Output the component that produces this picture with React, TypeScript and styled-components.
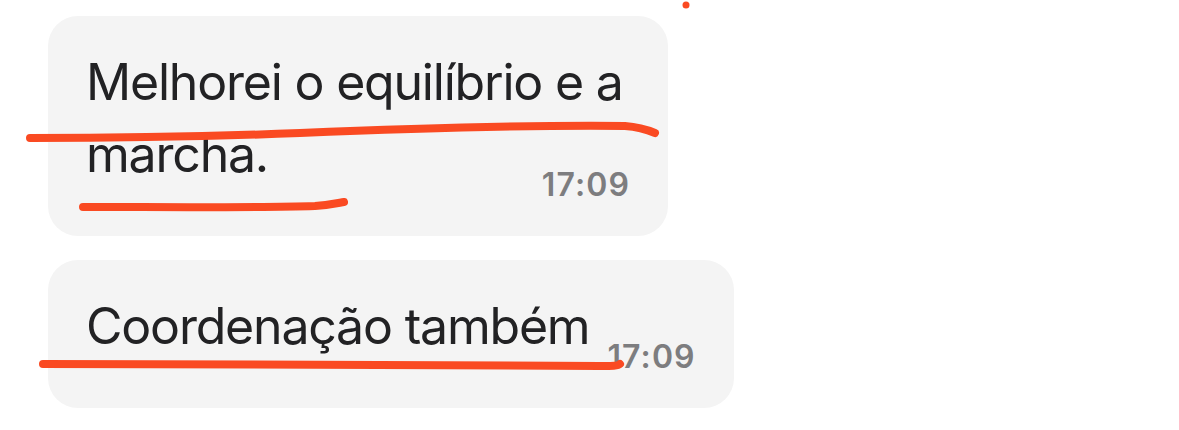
import React from "react";
import styled, { createGlobalStyle } from "styled-components";

const Global = createGlobalStyle`
  html, body { margin: 0; padding: 0; background: #ffffff; }
  body { font-family: Inter, "Noto Sans", sans-serif; }
`;

const Page = styled.div`
  position: relative;
  width: 1179px;
  height: 430px;
  overflow: hidden;
  box-sizing: border-box;
  padding: 16px 0 0 48px;
  display: flex;
  flex-direction: column;
  align-items: flex-start;
  gap: 24px;
`;

const Bubble = styled.div<{ $minH: number; $maxW: number }>`
  box-sizing: border-box;
  max-width: ${(p) => p.$maxW}px;
  min-height: ${(p) => p.$minH}px;
  padding: 30px 38px 0 38px;
  background: #f4f4f4;
  border-radius: 30px;
  display: flow-root;
`;

const Text = styled.div`
  font-size: 50px;
  line-height: 72px;
  color: #222224;
  letter-spacing: -1.2px;
`;

const Time = styled.span<{ $gap: number }>`
  float: right;
  margin-left: ${(p) => p.$gap}px;
  margin-top: 48px;
  font-size: 32px;
  line-height: 38px;
  font-weight: 600;
  color: #7d7d7f;
  letter-spacing: 1.1px;
`;

const Marks = styled.svg`
  position: absolute;
  left: 0;
  top: 0;
  pointer-events: none;
`;

export default function App() {
  return (
    <>
      <Global />
      <Page>
        <Bubble $minH={220} $maxW={620}>
          <Text>
            Melhorei o equilíbrio e a marcha.
            <Time $gap={19}>17:09</Time>
          </Text>
        </Bubble>
        <Bubble $minH={148} $maxW={760}>
          <Text>
            Coordenação também
            <Time $gap={18}>17:09</Time>
          </Text>
        </Bubble>
        <Marks width="1179" height="430" viewBox="0 0 1179 430">
          <g fill="none" stroke="#fa4a22" strokeWidth="8" strokeLinecap="round" strokeLinejoin="round">
            <path d="M30 138 C 120 138, 200 137, 300 133 C 420 128, 520 125, 625 126 C 640 127, 648 130, 655 133" />
            <path d="M83 207 C 160 207, 250 208, 315 206 C 330 205, 338 203, 344 202" />
            <path d="M43 364 C 200 364, 420 365, 600 366 C 612 366, 618 366, 620 364" />
          </g>
          <circle cx="686" cy="5" r="3.5" fill="#fa4a22" />
        </Marks>
      </Page>
    </>
  );
}
